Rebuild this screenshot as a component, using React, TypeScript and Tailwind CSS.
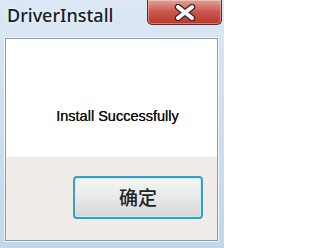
export default function App() {
  return (
    <div className="w-[224px] h-[248px] overflow-hidden flex flex-col bg-gradient-to-b from-[#dbe7f4] via-[#cfdfef] to-[#c2d6ec] font-['Noto_Sans',sans-serif]">
      {/* title bar */}
      <div className="h-[38px] flex items-start justify-between shrink-0">
        <div className="pl-[7px] pt-[4px] text-[18px] leading-[22px] font-medium text-[#15202c] [text-shadow:0_0_6px_rgba(255,255,255,0.9)]">
          DriverInstall
        </div>
        <div className="mr-[2px] w-[75px] h-[25px] rounded-b-[5px] border border-t-0 border-[#5a2a26] bg-gradient-to-b from-[#e2a196] via-[#c9554a] to-[#b8382e] flex items-center justify-center shadow-[inset_0_0_0_1px_rgba(255,255,255,0.35)]">
          <svg width="24" height="17" viewBox="0 0 24 17">
            <path
              d="M5 3 L19 14 M19 3 L5 14"
              stroke="#3b2624"
              strokeWidth="6.5"
              strokeLinecap="round"
            />
            <path
              d="M5 3 L19 14 M19 3 L5 14"
              stroke="#ffffff"
              strokeWidth="4"
              strokeLinecap="round"
            />
          </svg>
        </div>
      </div>

      {/* client area */}
      <div className="ml-[5px] mr-[6px] mb-[7px] flex-1 flex flex-col border border-[#8e9aa8] shadow-[0_0_0_1px_rgba(255,255,255,0.7)]">
        <div className="h-[118px] bg-white flex justify-center pt-[69px] pl-[12px]">
          <span className="font-['Liberation_Sans',Arial,sans-serif] text-[14.5px] leading-[16px] text-[#111] [text-shadow:0_0_0.6px_#111]">
            Install Successfully
          </span>
        </div>
        <div className="flex-1 bg-[#f0ece8] flex justify-end items-start pt-[19px] pr-[14px]">
          <button className="w-[130px] h-[43px] rounded-[4px] border-2 border-[#3d9cc6] bg-gradient-to-b from-[#f5f5f5] via-[#e9e9e9] to-[#d6d6d6] shadow-[inset_0_0_0_1px_#c9eefb] flex items-center justify-center text-[19px] font-medium text-[#222] font-['Noto_Sans_CJK_SC',sans-serif]">
            确定
          </button>
        </div>
      </div>
    </div>
  );
}
